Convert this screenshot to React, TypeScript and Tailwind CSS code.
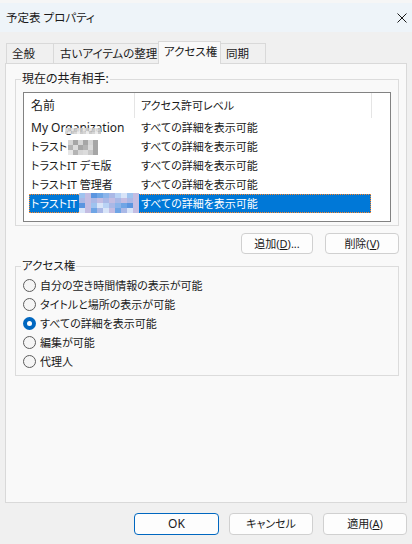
import React from "react";

type Row = { name: string; level: string; selected?: boolean };

const rows: Row[] = [
  { name: "My Organization", level: "すべての詳細を表示可能" },
  { name: "トラスト", level: "すべての詳細を表示可能" },
  { name: "トラストIT デモ版", level: "すべての詳細を表示可能" },
  { name: "トラストIT 管理者", level: "すべての詳細を表示可能" },
  { name: "トラストIT", level: "すべての詳細を表示可能", selected: true },
];

const options = [
  "自分の空き時間情報の表示が可能",
  "タイトルと場所の表示が可能",
  "すべての詳細を表示可能",
  "編集が可能",
  "代理人",
];

// pixelated redaction blocks
function Mosaic({
  cols,
  rows,
  cw,
  ch,
  colors,
  className,
}: {
  cols: number;
  rows: number;
  cw: number;
  ch: number;
  colors: string[];
  className: string;
}) {
  const cells = [];
  for (let r = 0; r < rows; r++) {
    for (let c = 0; c < cols; c++) {
      const color = colors[(r * 7 + c * 3 + r * c) % colors.length];
      cells.push(<rect key={`${r}-${c}`} x={c * cw} y={r * ch} width={cw} height={ch} fill={color} />);
    }
  }
  return (
    <svg className={className} width={cols * cw} height={rows * ch} viewBox={`0 0 ${cols * cw} ${rows * ch}`}>
      {cells}
    </svg>
  );
}

const grays = ["#e4e4e4", "#d2d2d2", "#f0f0f0", "#c6c6c6", "#dadada", "#ececec"];
const darkGrays = ["#d6d6d6", "#b4b4b4", "#e6e6e6", "#a6a6a6", "#c8c8c8", "#dcdcdc"];
const blues = ["#9fc3ef", "#6fa5e5", "#b9d2f4", "#c4bde2", "#8bb4ea", "#d8e4f8", "#5b95e0", "#aab8e6"];

function Tab({ label, selected, className }: { label: string; selected?: boolean; className: string }) {
  if (selected) {
    return (
      <div
        className={`relative z-20 -mb-px h-[23px] flex items-center pb-[3px] whitespace-nowrap bg-[#f9f9f9] border-l border-t border-r border-[#d9d9d9] ${className}`}
      >
        {label}
      </div>
    );
  }
  return (
    <div
      className={`h-[20px] flex items-center whitespace-nowrap bg-[#f0f0f0] border-l border-t border-r border-[#d9d9d9] ${className}`}
    >
      {label}
    </div>
  );
}

function Button({ children, className }: { children: React.ReactNode; className: string }) {
  return (
    <button className={`flex items-center justify-center rounded-[4px] bg-[#fdfdfd] border ${className}`}>
      {children}
    </button>
  );
}

export default function App() {
  return (
    <div className="w-[412px] h-[544px] overflow-hidden bg-[#f0f0f0] flex flex-col text-[11px] leading-[16px] text-[#1a1a1a] font-['Noto_Sans','Noto_Sans_CJK_JP',sans-serif] [font-feature-settings:'palt']">
      <div className="h-[3px] bg-[#f6f6f6]" />
      <div className="h-[29px] bg-[#eef4f9] flex items-center justify-between pl-[6px] pr-[6px] text-[11.5px]">
        <span>予定表 プロパティ</span>
        <svg width="10" height="10" viewBox="0 0 10 10" className="mr-[-1px]">
          <path d="M0.5 0.5 L9.5 9.5 M9.5 0.5 L0.5 9.5" stroke="#1a1a1a" strokeWidth="1" />
        </svg>
      </div>

      <div className="mt-[9px] h-[22px] flex items-end pl-[6px] text-[11.5px]">
        <Tab label="全般" className="w-[48px] pl-[5px]" />
        <Tab label="古いアイテムの整理" className="-ml-px w-[106px] pl-[6px]" />
        <Tab label="アクセス権" selected className="-ml-px w-[63px] pl-[5px]" />
        <Tab label="同期" className="-ml-px w-[46px] pl-[5px]" />
      </div>

      <div className="relative z-10 mx-[5px] h-[440px] border border-[#d9d9d9] bg-[#f9f9f9] flex flex-col pl-[9px] pr-[7px]">
        <fieldset className="mt-[7px] border border-[#dcdcdc] px-[7px] pt-[5px] pb-[3px]">
          <legend className="px-px -ml-[2px] text-[12px]">現在の共有相手:</legend>
          <div className="h-[130px] border border-[#828282] bg-white flex flex-col">
            <div className="h-[25px] flex pl-[5px]">
              <div className="w-[106px] pl-[2px] flex items-center border-r border-[#e5e5e5] text-[12px]">名前</div>
              <div className="w-[237px] pl-[6px] flex items-center border-r border-[#e5e5e5]">アクセス許可レベル</div>
            </div>
            {rows.map((r, i) => (
              <div
                key={i}
                className={`relative ml-[5px] w-[342px] h-[19px] flex items-center ${
                  r.selected
                    ? "bg-[#0078d7] text-white outline-1 outline-dotted outline-[#ff8728] -outline-offset-1"
                    : ""
                }`}
              >
                <div className={`w-[105px] pl-[2px] whitespace-nowrap flex items-center ${i === 0 ? "text-[12px]" : ""}`}>
                  <span>{r.name}</span>
                  {i === 1 && <Mosaic cols={6} rows={3} cw={5} ch={5} colors={darkGrays} className="ml-[1px] mt-[1px]" />}
                </div>
                <div className="pl-[7px] whitespace-nowrap">{r.level}</div>
                {i === 0 && (
                  <Mosaic cols={12} rows={2} cw={3} ch={3} colors={grays} className="absolute left-[36px] top-[10px] opacity-90" />
                )}
                {i === 4 && (
                  <Mosaic cols={10} rows={4} cw={6} ch={5} colors={blues} className="absolute left-[50px] top-[-1px]" />
                )}
              </div>
            ))}
          </div>
        </fieldset>

        <div className="mt-[7px] flex justify-end gap-[12px]">
          <Button className="w-[72px] h-[21px] border-[#d0d0d0]">
            追加(<u>D</u>)...
          </Button>
          <Button className="w-[74px] h-[21px] border-[#d0d0d0]">
            削除(<u>V</u>)
          </Button>
        </div>

        <fieldset className="mt-[4px] border border-[#dcdcdc] px-[7px] pt-[2px] pb-[4px]">
          <legend className="px-px -ml-[2px] text-[11.5px]">アクセス権</legend>
          {options.map((o, i) => (
            <div key={o} className="h-[19px] flex items-center gap-[4px]">
              {i === 2 ? (
                <span className="w-[13px] h-[13px] rounded-full bg-[#0067c0] flex items-center justify-center">
                  <span className="w-[5px] h-[5px] rounded-full bg-white" />
                </span>
              ) : (
                <span className="w-[13px] h-[13px] rounded-full border border-[#5c5c5c] bg-[#f5f5f5]" />
              )}
              <span>{o}</span>
            </div>
          ))}
        </fieldset>
      </div>

      <div className="mt-[10px] flex justify-end gap-[10px] pr-[5px]">
        <Button className="w-[85px] h-[22px] border-[#0067c0] text-[12px]">OK</Button>
        <Button className="w-[84px] h-[22px] border-[#d0d0d0]">キャンセル</Button>
        <Button className="w-[84px] h-[22px] border-[#d0d0d0]">
          適用(<u>A</u>)
        </Button>
      </div>
    </div>
  );
}
